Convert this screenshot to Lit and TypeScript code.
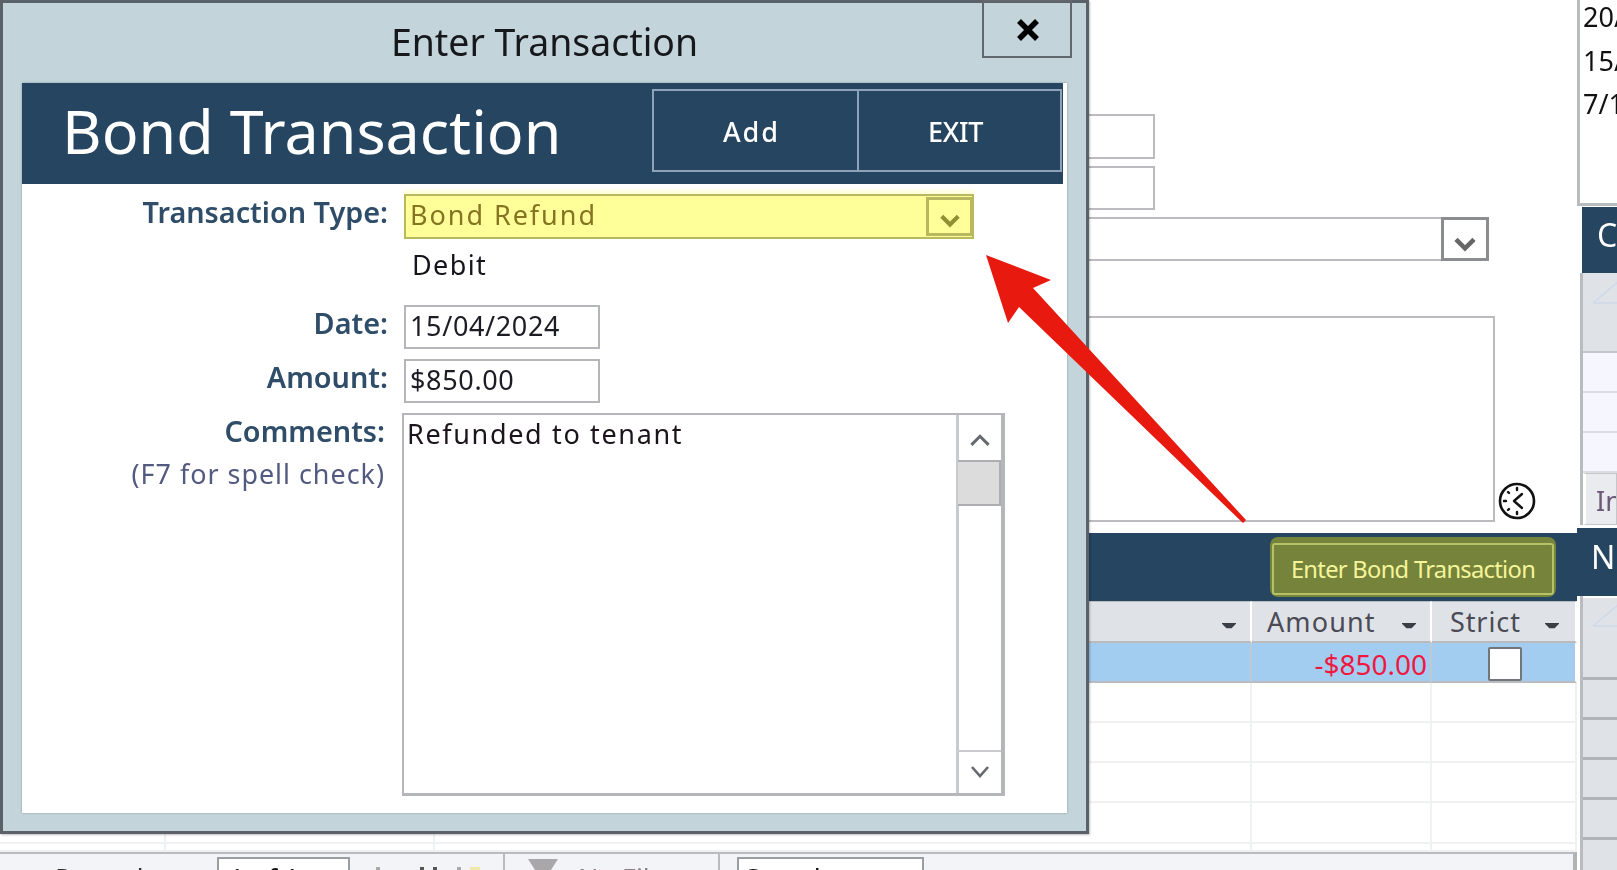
import { LitElement, html, css, svg } from "lit";
import { customElement } from "lit/decorators.js";

const chevDown = (w = 24) => html`<svg viewBox="0 0 20 14" width=${w} height=${(w * 14) / 20}><path d="M2.5 2 L10 9.5 L17.5 2" fill="none" stroke="currentColor" stroke-width="3.8"/></svg>`;
const chevUp = html`<svg viewBox="0 0 20 14" width="22" height="15"><path d="M2 12 L10 4 L18 12" fill="none" stroke="currentColor" stroke-width="2.8"/></svg>`;
const chevThin = html`<svg viewBox="0 0 20 14" width="20" height="14"><path d="M2 2 L10 11 L18 2" fill="none" stroke="currentColor" stroke-width="2.6"/></svg>`;
const sortCaret = html`<svg class="caret" viewBox="0 0 16 8" width="14" height="7"><path d="M0 1 H16 V2 L11 7 H5 L0 2 Z" fill="#3a3f46"/></svg>`;

@customElement("app-root")
export class AppRoot extends LitElement {
  static styles = css`
    :host {
      display: block;
      position: relative;
      width: 1617px;
      height: 870px;
      overflow: hidden;
      background: #fff;
      font-family: "Noto Sans", "Open Sans", sans-serif;
      color: #111;
    }
    .desk {
      display: grid;
      grid-template-columns: 1577px 40px;
      height: 870px;
      filter: blur(0.45px);
    }
    .main { display: flex; flex-direction: column; height: 870px; overflow: hidden; }
    .fields {
      display: flex;
      flex-direction: column;
      height: 533px;
      flex: none;
      padding: 114px 0 0 1000px;
      box-sizing: border-box;
    }
    .box { border: 2px solid #b9bbbf; box-sizing: border-box; background: #fff; flex: none; }
    .f1 { width: 155px; height: 45px; }
    .f2 { width: 155px; height: 44px; margin-top: 7px; }
    .f3 {
      width: 489px; height: 44px; margin-top: 7px;
      display: flex; justify-content: flex-end;
    }
    .f3 .drop {
      width: 48px; margin: -2px -2px -2px 0;
      border: 3px solid #8b8d90; box-sizing: border-box;
      display: flex; align-items: center; justify-content: center;
      color: #666;
      padding-top: 12px;
    }
    .f4 { width: 495px; height: 206px; margin-top: 55px; }
    .band {
      height: 68px;
      flex: none;
      background: #264560;
      display: flex;
      justify-content: flex-end;
      align-items: center;
      padding-right: 21px;
      box-sizing: border-box;
    }
    .green {
      width: 286px; height: 60px;
      background: #76833a;
      border-radius: 8px;
      padding: 6px 2px 2px;
      box-sizing: border-box;
    }
    .green span {
      display: flex; align-items: center; justify-content: center;
      height: 100%;
      border: 2px solid #b5c268;
      border-radius: 3px;
      box-sizing: border-box;
      color: #f4f59b;
      font-size: 23.7px;
      letter-spacing: -0.7px;
      white-space: nowrap;
    }
    .grid {
      display: grid;
      grid-template-columns: 166px 269px 817px 180px 145px;
      grid-template-rows: 42px 40px 40px 40px 40px 41px 8px;
      height: 251px;
      flex: none;
    }
    .cell {
      border-right: 2px solid #f0f1f2;
      border-bottom: 2px solid #f0f1f2;
      box-sizing: border-box;
    }
    .hd {
      background: #dfe3e7;
      border-right: 2px solid #fff;
      border-bottom: 2px solid #b9bbbf;
      border-top: 1px solid #b9bbbf;
      display: flex; align-items: center; justify-content: space-between;
      padding: 0 14px 0 15px;
      color: #4b4a55;
      font-size: 27px;
      letter-spacing: 1.1px;
      white-space: nowrap;
      box-sizing: border-box;
    }
    .hd.end { justify-content: flex-end; }
    .hd.st { padding-left: 18px; letter-spacing: 0.9px; padding-right: 16px; }
    .caret { flex: none; margin-top: 8px; }
    .sel {
      background: #a3cdf0;
      border-right: 2px solid #c0c8d0;
      border-bottom: 2px solid #b9bbbf;
      box-sizing: border-box;
      display: flex; align-items: center; justify-content: flex-end;
    }
    .neg { color: #f01840; font-size: 28px; padding: 3px 3px 0 0; white-space: nowrap; }
    .chkcell { justify-content: flex-start; padding: 3px 0 0 56px; border-right-color: #fff; }
    .chk { width: 34px; height: 34px; background: #fff; border: 2px solid #72767a; box-sizing: border-box; border-radius: 2px; }
    .foot {
      flex: 1;
      background: #f3f4f7;
      border-top: 2px solid #b9bbbf;
      border-right: 4px solid #b0b3b8;
      box-sizing: border-box;
      display: flex;
      font-size: 27px;
      line-height: 27px;
      color: #333;
      overflow: hidden;
    }
    .foot > * { white-space: nowrap; flex: none; }
    .rec { width: 217px; padding: 11px 0 0 55px; box-sizing: border-box; }
    .cur { width: 133px; height: 40px; margin-top: 3px; padding: 6px 0 0 10px; box-sizing: border-box; border: 2px solid #9a9da1; background: #fff; color: #111; }
    .nav { width: 155px; border-right: 2px solid #b9bbbf; box-sizing: border-box; display: flex; padding-top: 13px; }
    .nav i { display: block; width: 4px; height: 3px; background: #555; }
    .nav i:nth-child(1) { margin-left: 26px; background: #aaa; }
    .nav i:nth-child(2) { margin-left: 40px; }
    .nav i:nth-child(3) { margin-left: 9px; }
    .nav i:nth-child(4) { margin-left: 20px; background: #aaa; }
    .nav i:nth-child(5) { margin-left: 9px; width: 10px; background: #f0e8a8; }
    .nofil { width: 215px; border-right: 2px solid #b9bbbf; box-sizing: border-box; display: flex; gap: 20px; padding: 5px 0 0 23px; color: #8a7f88; }
    .nofil span + span { margin-top: 6px; }
    .fun { width: 30px; height: 14px; background: #aaa7ab; flex: none; clip-path: polygon(0 0, 100% 0, 70% 100%, 30% 100%); }
    .sr { width: 187px; height: 40px; margin: 3px 0 0 17px; padding: 6px 0 0 6px; box-sizing: border-box; border: 2px solid #9a9da1; background: #fff; color: #111; }

    .side { display: flex; flex-direction: column; height: 870px; overflow: hidden; width: 40px; }
    .side > * { flex: none; }
    .dates {
      height: 206px;
      border-left: 3px solid #b9bbbf;
      border-bottom: 3px solid #b9bbbf;
      box-sizing: border-box;
      padding: 0 0 0 3px;
      font-size: 27px;
      line-height: 43.5px;
      overflow: hidden;
      white-space: nowrap;
    }
    .dates div { margin-top: -5px; }
    .navy {
      background: #264560; color: #fff;
      font-size: 32px;
      overflow: hidden; box-sizing: border-box;
      display: flex; align-items: center;
      white-space: nowrap;
    }
    .c { height: 66px; margin: 1px 0 0 5px; padding: 0 0 12px 15px; }
    .n { height: 68px; margin-top: 3px; padding: 0 0 12px 14px; }
    .stack { border-left: 3px solid #b9bbbf; margin-left: 3px; box-sizing: border-box; display: flex; flex-direction: column; }
    .stack > * { flex: none; }
    .gr { background: #dfe3e7; position: relative; overflow: hidden; }
    .gh1 { height: 80px; border-bottom: 2px solid #c4c6ca; box-sizing: border-box; }
    .gr svg { position: absolute; left: 0; top: 0; }
    .lav { height: 40px; background: #f5f6fe; border-bottom: 2px solid #dcdde2; box-sizing: border-box; }
    .tab {
      height: 52px; background: #e9ebee; border: 1px solid #c4c6ca; border-left: 3px solid #fff;
      box-sizing: border-box; padding: 8px 0 0 10px;
      color: #6d5a78; font-size: 27px; white-space: nowrap; overflow: hidden;
    }
    .gh2 { height: 82px; margin-top: 2px; border-bottom: 3px solid #b0b3b8; box-sizing: border-box; }
    .gr3 { height: 40px; background: #dfe3e7; border-bottom: 3px solid #b0b3b8; box-sizing: border-box; }

    /* floating window */
    .win {
      position: absolute;
      left: 0; top: 0;
      width: 1089px; height: 834px;
      background: #c3d5db;
      border: 3px solid #5b6169;
      box-sizing: border-box;
      box-shadow: 1px 1px 2px rgba(0,0,0,0.25);
      filter: blur(0.45px);
    }
    .tbar {
      height: 80px;
      display: flex;
      position: relative;
      align-items: center;
      justify-content: center;
      font-size: 37.4px;
      color: #16181c;
    }
    .tbar .ttl { transform: translateY(-2px); }
    .close {
      position: absolute;
      left: 979px; top: -3px;
      width: 90px; height: 58px;
      border: 2px solid #62676e;
      box-sizing: border-box;
      display: flex; align-items: center; justify-content: center;
      padding: 2px 0 0 2px;
    }
    .inner {
      margin-left: 19px;
      width: 1045px;
      height: 730px;
      background: #fff;
      box-sizing: border-box;
      box-shadow: 0 0 2px rgba(80,90,100,.5);
    }
    .head {
      width: 1041px; height: 101px;
      background: #264560;
      color: #fff;
      display: flex;
      align-items: center;
      justify-content: space-between;
      padding: 0 1px 0 40px;
      box-sizing: border-box;
    }
    .head h1 { margin: 0 0 6px; font-size: 61px; font-weight: 400; white-space: nowrap; }
    .btns {
      display: flex;
      height: 83px;
      margin-bottom: 7px;
      border: 2px solid #8ea3b8;
      box-sizing: border-box;
    }
    .btns div {
      display: flex; align-items: center; justify-content: center;
      font-size: 27px;
      font-weight: 500;
      width: 203px;
      box-sizing: border-box;
      padding: 2px 8px 0 0;
    }
    .btns .add { letter-spacing: 2px; }
    .btns .ex { letter-spacing: -0.3px; }
    .btns div + div { border-left: 2px solid #8ea3b8; }
    .form { padding-top: 10px; display: flex; flex-direction: column; }
    .row { display: grid; grid-template-columns: 366px 1fr; column-gap: 16px; }
    .lab {
      text-align: right;
      color: #2f4d68;
      font-size: 28.8px;
      font-weight: 600;
      white-space: nowrap;
      line-height: 38px;
      margin-top: -1px;
    }
    .r1 { height: 45px; }
    .sel2 {
      width: 570px; height: 45px;
      background: #ffff99;
      border: 2px solid #b8b860;
      box-sizing: border-box;
      box-shadow: 0 -4px 3px #ffffdc;
      display: flex;
      justify-content: space-between;
      color: #857522;
      font-size: 27px;
      line-height: 38px;
      letter-spacing: 1.95px;
      padding-left: 4px;
    }
    .sel2 .drop {
      width: 46px; margin: 1px 0;
      border: 3px solid #b8b860; border-right-width: 2px;
      box-sizing: border-box;
      display: flex; align-items: center; justify-content: center;
      color: #8f8f35;
      padding-top: 11px;
    }
    .debit { height: 66px; padding-left: 8px; font-size: 27px; line-height: 52px; letter-spacing: 1.4px; color: #16141c; }
    .r2 { height: 44px; margin-bottom: 10px; }
    .inp {
      width: 196px; height: 44px;
      border: 2px solid #b4b6ba;
      box-sizing: border-box;
      padding-left: 4px;
      font-size: 27px;
      line-height: 38px;
      letter-spacing: 0.65px;
      color: #1c1c24;
      white-space: nowrap;
    }
    .memo {
      margin-left: -2px;
      width: 603px; height: 383px;
      border: 2px solid #b4b6ba;
      border-right-width: 4px;
      border-bottom-width: 3px;
      box-sizing: border-box;
      display: flex;
      justify-content: space-between;
    }
    .memo .txt { padding: 1px 0 0 3px; font-size: 27px; line-height: 36px; letter-spacing: 1.65px; color: #1c141c; white-space: nowrap; }
    .scroll {
      width: 45px;
      border-left: 3px solid #c8cacd;
      box-sizing: border-box;
      display: flex; flex-direction: column;
      color: #65686c;
    }
    .sb { height: 45px; display: flex; align-items: center; justify-content: center; flex: none; padding-top: 4px; box-sizing: border-box; }
    .thumb { height: 46px; background: #dcdcdc; border: 2px solid #acaeb1; border-left-width: 0; margin-left: -1px; box-sizing: border-box; flex: none; }
    .track { flex: 1; }
    .sb.dn { height: 43px; padding: 0 0 2px; border-top: 2px solid #c8cacd; }
    .hint { font-size: 26.9px; line-height: 36px; font-weight: 400; color: #525a80; letter-spacing: 1px; margin-top: 6px; }
    .lab3 { margin-right: 3px; }

    .over { position: absolute; left: 0; top: 0; width: 1617px; height: 870px; pointer-events: none; filter: blur(0.4px); }
  `;

  render() {
    return html`
      <div class="desk">
        <div class="main">
          <div class="fields">
            <div class="box f1"></div>
            <div class="box f2"></div>
            <div class="box f3"><div class="drop">${chevDown(24)}</div></div>
            <div class="box f4"></div>
          </div>
          <div class="band"><div class="green"><span>Enter Bond Transaction</span></div></div>
          <div class="grid">
            <div class="hd"></div><div class="hd"></div>
            <div class="hd end">${sortCaret}</div>
            <div class="hd">Amount ${sortCaret}</div>
            <div class="hd st">Strict ${sortCaret}</div>

            <div class="sel"></div><div class="sel"></div><div class="sel"></div>
            <div class="sel"><span class="neg">-$850.00</span></div>
            <div class="sel chkcell"><div class="chk"></div></div>

            ${[0, 1, 2, 3, 4].map(() => html`
              <div class="cell"></div><div class="cell"></div><div class="cell"></div><div class="cell"></div><div class="cell"></div>`)}
          </div>
          <div class="foot">
            <div class="rec">Record:</div>
            <div class="cur">1 of 1</div>
            <div class="nav"><i></i><i></i><i></i><i></i><i></i></div>
            <div class="nofil"><span class="fun"></span><span>No Filter</span></div>
            <div class="sr">Search</div>
          </div>
        </div>
        <div class="side">
          <div class="dates"><div>20/03/2024<br />15/04/2024<br />7/11/2023</div></div>
          <div class="navy c">Credits</div>
          <div class="stack">
            <div class="gr gh1"><svg width="40" height="40"><path d="M10 30 L36 8 M10 30 H36" stroke="#cfd9ea" stroke-width="1.5" fill="none"/></svg></div>
            <div class="lav"></div><div class="lav"></div><div class="lav"></div>
            <div class="tab">Invoice</div>
          </div>
          <div class="navy n">Notes</div>
          <div class="stack">
            <div class="gr gh2"><svg width="40" height="40"><path d="M10 28 L36 6 M10 28 H36" stroke="#cfd9ea" stroke-width="1.5" fill="none"/></svg></div>
            <div class="gr3"></div><div class="gr3"></div><div class="gr3"></div><div class="gr3"></div><div class="gr3"></div>
          </div>
        </div>
      </div>

      <div class="win">
        <div class="tbar">
          <span class="ttl">Enter Transaction</span>
          <div class="close">
            <svg width="26" height="24" viewBox="0 0 26 24"><path d="M4 3 L22 21 M22 3 L4 21" stroke="#000" stroke-width="5.5"/></svg>
          </div>
        </div>
        <div class="inner">
          <div class="head">
            <h1>Bond Transaction</h1>
            <div class="btns"><div class="add">Add</div><div class="ex">EXIT</div></div>
          </div>
          <div class="form">
            <div class="row r1">
              <div class="lab">Transaction Type:</div>
              <div class="sel2"><span>Bond Refund</span><span class="drop">${chevDown(22)}</span></div>
            </div>
            <div class="row"><div></div><div class="debit">Debit</div></div>
            <div class="row r2"><div class="lab">Date:</div><div class="inp">15/04/2024</div></div>
            <div class="row r2"><div class="lab">Amount:</div><div class="inp">$850.00</div></div>
            <div class="row">
              <div>
                <div class="lab lab3">Comments:</div>
                <div class="lab lab3 hint">(F7 for spell check)</div>
              </div>
              <div class="memo">
                <div class="txt">Refunded to tenant</div>
                <div class="scroll">
                  <div class="sb">${chevUp}</div>
                  <div class="thumb"></div>
                  <div class="track"></div>
                  <div class="sb dn">${chevThin}</div>
                </div>
              </div>
            </div>
          </div>
        </div>
      </div>

      <svg class="over" viewBox="0 0 1617 870">
        <polygon points="986,255 1051,280 1033,288 1246,520 1243,523 1019,307 1008,323" fill="#e8190f"/>
        ${svg`<g transform="translate(1517 501)">
          <circle r="17" fill="#fff" stroke="#111" stroke-width="2.6"/>
          <g stroke="#111" stroke-width="2.4" stroke-linecap="round">
            <path d="M0 -13 V-11 M0 11 V13 M-13 0 H-11 M-9 -9 L-8 -8 M-9 9 L-8 8"/>
            <path d="M-3 0 L5 -7 M-3 0 L5 7"/>
          </g>
        </g>`}
      </svg>
    `;
  }
}
